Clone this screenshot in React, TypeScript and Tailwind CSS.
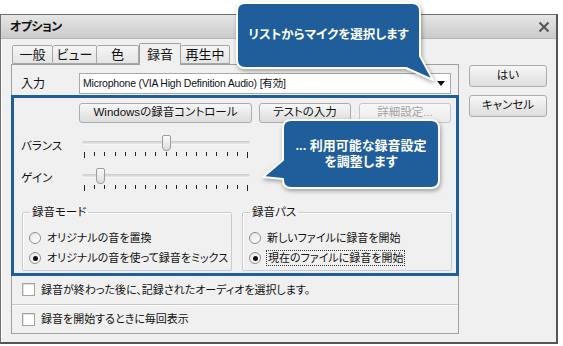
import React from "react";

const tabs = ["一般", "ビュー", "色", "録音", "再生中"];
const tabWidths = ["w-[41px]", "w-[44px]", "w-[42px]", "w-[42px]", "w-[49px]"];

const Btn: React.FC<{ className?: string; disabled?: boolean; children: React.ReactNode }> = ({
  className = "",
  disabled,
  children,
}) => {
  return (
    <div
      className={`h-[20px] flex items-center justify-center border border-[#acacac] rounded-[3px] bg-gradient-to-b from-[#f7f7f7] to-[#dddddd] text-[11.5px] whitespace-nowrap ${
        disabled ? "text-[#a3a3a3] border-[#c6c6c6] from-[#f4f4f4] to-[#ececec]" : "text-[#111]"
      } ${className}`}
    >
      {children}
    </div>
  );
};

const Slider: React.FC<{ pos: number }> = ({ pos }) => {
  return (
    <div className="w-[168px]">
      <div className="relative h-[16px]">
        <div className="absolute left-0 right-0 top-[6px] h-[4px] rounded-[2px] bg-gradient-to-b from-[#c9c9c9] to-[#e8e8e8] border-b border-[#f8f8f8]" />
        <div
          className="absolute top-0 w-[9px] h-[16px] rounded-t-[2px] rounded-b-[4px] border border-[#9c9c9c] bg-gradient-to-b from-[#fbfbfb] to-[#dcdcdc]"
          style={{ left: pos }}
        />
      </div>
      <div className="mt-[1px] px-[2px] flex justify-between items-start">
        {Array.from({ length: 17 }).map((_, i) => (
          <div
            key={i}
            className={`w-[1px] bg-[#222] ${i === 0 || i === 16 ? "h-[6px]" : "h-[4px]"}`}
          />
        ))}
      </div>
    </div>
  );
};

const Radio: React.FC<{ checked?: boolean; focus?: boolean; label: string }> = ({
  checked,
  focus,
  label,
}) => {
  return (
    <div className="h-[20px] flex items-center whitespace-nowrap">
      <div className="w-[12px] h-[12px] rounded-full border border-[#8f8f8f] bg-gradient-to-br from-[#e6e6e6] to-white flex items-center justify-center">
        {checked && <div className="w-[5px] h-[5px] rounded-full bg-[#111]" />}
      </div>
      <span
        className={`leading-[14px] ${
          focus ? "ml-[5px] border border-dotted border-[#333] px-[1px]" : "ml-[6px]"
        }`}
      >
        {label}
      </span>
    </div>
  );
};

const Check: React.FC<{ label: string }> = ({ label }) => {
  return (
    <div className="flex-1 flex items-center pl-[10px] whitespace-nowrap">
      <div className="w-[13px] h-[13px] border border-[#a3a3a3] bg-white shadow-[inset_1px_1px_0_#e2e2e2]" />
      <span className="ml-[6px]">{label}</span>
    </div>
  );
};

export default function App() {
  return (
    <div className="relative w-[563px] h-[346px] bg-white overflow-hidden text-[11px] text-[#111] font-['Liberation_Sans','Noto_Sans_CJK_JP',sans-serif] [font-feature-settings:'palt']">
      {/* window */}
      <div className="mt-[14px] w-[558px] h-[330px] border border-[#6f6f6f] border-r-2 border-b-2 border-r-[#555] border-b-[#555] bg-[#f0f0f0] flex flex-col shadow-[inset_1px_1px_0_#ffffff]">
        <div className="h-[24px] flex items-center justify-between pl-[9px] pr-[6px] bg-gradient-to-b from-[#e6e6e6] to-[#cbcbcb] border-b border-[#b5b5b5]">
          <span className="font-bold text-[12px] tracking-[-0.5px]">オプション</span>
          <svg width="12" height="12" viewBox="0 0 12 12">
            <path d="M1.5 1.5 L10.5 10.5 M10.5 1.5 L1.5 10.5" stroke="#555" strokeWidth="2" />
          </svg>
        </div>

        <div className="flex pl-[10px]">
          {/* left column */}
          <div className="w-[448px] pt-[4px]">
            <div className="h-[21px] flex items-end pl-[1px] relative z-10">
              {tabs.map((t, i) =>
                i === 3 ? (
                  <div
                    key={t}
                    className={`${tabWidths[i]} h-[22px] -mb-[1px] flex items-center justify-center border border-b-0 border-[#a0a0a0] bg-[#f0f0f0] rounded-t-[2px] text-[13px]`}
                  >
                    {t}
                  </div>
                ) : (
                  <div
                    key={t}
                    className={`${tabWidths[i]} h-[19px] flex items-center justify-center border border-[#a7a7a7] ${
                      i === 0 ? "" : "border-l-0"
                    } ${i === 4 ? "border-l" : ""} bg-gradient-to-b from-[#f5f5f5] to-[#e4e4e4] rounded-t-[2px] text-[13px]`}
                  >
                    {t}
                  </div>
                )
              )}
            </div>

            <div className="h-[270px] border border-[#a0a0a0] bg-[#f0f0f0] flex flex-col">
              <div className="pt-[8px] pl-[9px] flex items-center">
                <div className="w-[58px] text-[12px]">入力</div>
                <div className="w-[372px] h-[21px] border border-[#a9a9a9] bg-white flex items-center justify-between pl-[3px] pr-[5px]">
                  <span className="text-[10.5px] tracking-[-0.2px]">Microphone (VIA High Definition Audio) [有効]</span>
                  <svg width="8" height="5" viewBox="0 0 8 5">
                    <path d="M0 0 H8 L4 5 Z" fill="#111" />
                  </svg>
                </div>
              </div>

              {/* highlighted area */}
              <div className="mt-[1px] -mx-[1px] h-[181px] border-[3px] border-[#1f5e9a] flex flex-col">
                <div className="pt-[5px] pl-[65px] flex">
                  <Btn className="w-[173px]">Windowsの録音コントロール</Btn>
                  <Btn className="ml-[7px] w-[92px]">テストの入力</Btn>
                  <Btn className="ml-[8px] w-[92px]" disabled>
                    詳細設定...
                  </Btn>
                </div>

                <div className="mt-[12px] pl-[7px] flex items-start">
                  <div className="w-[61px] pt-[3px] text-[11.5px]">バランス</div>
                  <Slider pos={80} />
                </div>
                <div className="mt-[10px] pl-[7px] flex items-start">
                  <div className="w-[61px] pt-[2px] text-[11.5px]">ゲイン</div>
                  <Slider pos={14} />
                </div>

                <div className="mt-[14px] pl-[8px] flex">
                  <fieldset className="w-[210px] h-[66px] border border-[#cbcbcb] rounded-[2px] pl-[6px] shadow-[inset_1px_1px_0_#fff]">
                    <legend className="ml-[1px] px-[2px] leading-[14px] text-[11.5px]">録音モード</legend>
                    <div className="pt-[9px]">
                      <Radio label="オリジナルの音を置換" />
                      <Radio checked label="オリジナルの音を使って録音をミックス" />
                    </div>
                  </fieldset>
                  <fieldset className="ml-[10px] w-[210px] h-[66px] border border-[#cbcbcb] rounded-[2px] pl-[6px] shadow-[inset_1px_1px_0_#fff]">
                    <legend className="ml-[1px] px-[2px] leading-[14px] text-[11.5px]">録音パス</legend>
                    <div className="pt-[9px]">
                      <Radio label="新しいファイルに録音を開始" />
                      <Radio checked focus label="現在のファイルに録音を開始" />
                    </div>
                  </fieldset>
                </div>
              </div>

              <div className="flex-1 flex flex-col">
                <Check label="録音が終わった後に、記録されたオーディオを選択します。" />
                <div className="h-[1px] bg-[#c8c8c8] border-b border-white box-content" />
                <Check label="録音を開始するときに毎回表示" />
              </div>
            </div>
          </div>

          {/* right buttons */}
          <div className="ml-[10px] pt-[26px] flex flex-col gap-[8px]">
            <Btn className="w-[78px] !h-[22px]">はい</Btn>
            <Btn className="w-[78px] !h-[22px]">キャンセル</Btn>
          </div>
        </div>
      </div>

      {/* callout 1 */}
      <div className="absolute left-[230px] top-0 w-[210px] h-[86px]">
        <svg
          className="absolute inset-0 drop-shadow-[1px_2px_2px_rgba(0,0,0,0.35)]"
          width="210"
          height="86"
          viewBox="0 0 210 86"
        >
          <path
            d="M15 3 H182 Q190 3 190 11 V56 L203 80 L176 68 H15 Q7 68 7 60 V11 Q7 3 15 3 Z"
            fill="#1f5e9a"
            stroke="#ffffff"
            strokeWidth="2"
            strokeLinejoin="round"
          />
        </svg>
        <div className="absolute left-[7px] top-[3px] w-[183px] h-[65px] flex items-center justify-center text-white font-bold text-[12.5px]">
          リストからマイクを選択します
        </div>
      </div>

      {/* callout 2 */}
      <div className="absolute left-[258px] top-[115px] w-[190px] h-[80px]">
        <svg
          className="absolute inset-0 drop-shadow-[1px_2px_2px_rgba(0,0,0,0.35)]"
          width="190"
          height="80"
          viewBox="0 0 190 80"
        >
          <path
            d="M33 5 H173 Q181 5 181 13 V65 Q181 73 173 73 H33 Q25 73 25 65 V64 L5 62 L25 45 V13 Q25 5 33 5 Z"
            fill="#1f5e9a"
            stroke="#ffffff"
            strokeWidth="2"
            strokeLinejoin="round"
          />
        </svg>
        <div className="absolute left-[25px] top-[5px] w-[156px] h-[68px] flex flex-col items-center justify-center text-white font-bold text-[13px] leading-[16px]">
          <span>... 利用可能な録音設定</span>
          <span>を調整します</span>
        </div>
      </div>
    </div>
  );
}
